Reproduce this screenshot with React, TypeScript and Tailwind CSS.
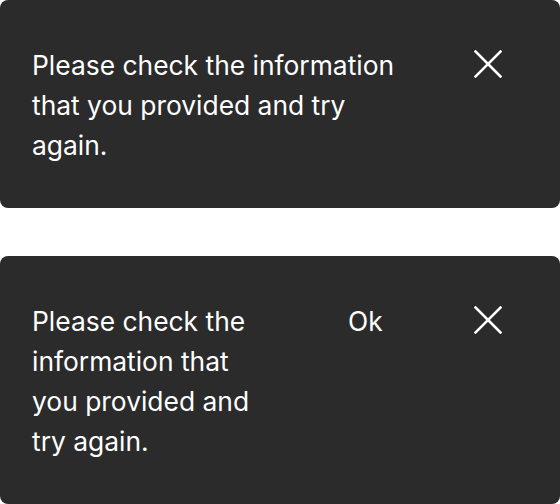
import React from "react";

function XIcon() {
  return (
    <svg width="28" height="28" viewBox="0 0 28 28" fill="none" stroke="white" strokeWidth="2.5" strokeLinecap="square">
      <path d="M1.5 1.5 L26.5 26.5 M26.5 1.5 L1.5 26.5" />
    </svg>
  );
}

export default function App() {
  return (
    <div className="w-[560px] h-[504px] bg-white flex flex-col gap-[48px] text-white text-[26.4px] leading-[40px]" style={{ fontFamily: "Inter, 'Noto Sans', sans-serif" }}>
      <div className="h-[208px] bg-[#2b2b2b] rounded-[8px] flex items-start pl-[32px] pr-[58px] pt-[45px] pb-[43px]">
        <p className="w-[372px]">Please check the information that you provided and try again.</p>
        <div className="ml-auto mt-[5px]"><XIcon /></div>
      </div>
      <div className="h-[248px] bg-[#2b2b2b] rounded-[8px] flex items-start pl-[32px] pr-[58px] pt-[45px] pb-[43px]">
        <p className="w-[240px]">Please check the information that you provided and try again.</p>
        <span className="ml-[76px]">Ok</span>
        <div className="ml-auto mt-[5px]"><XIcon /></div>
      </div>
    </div>
  );
}
